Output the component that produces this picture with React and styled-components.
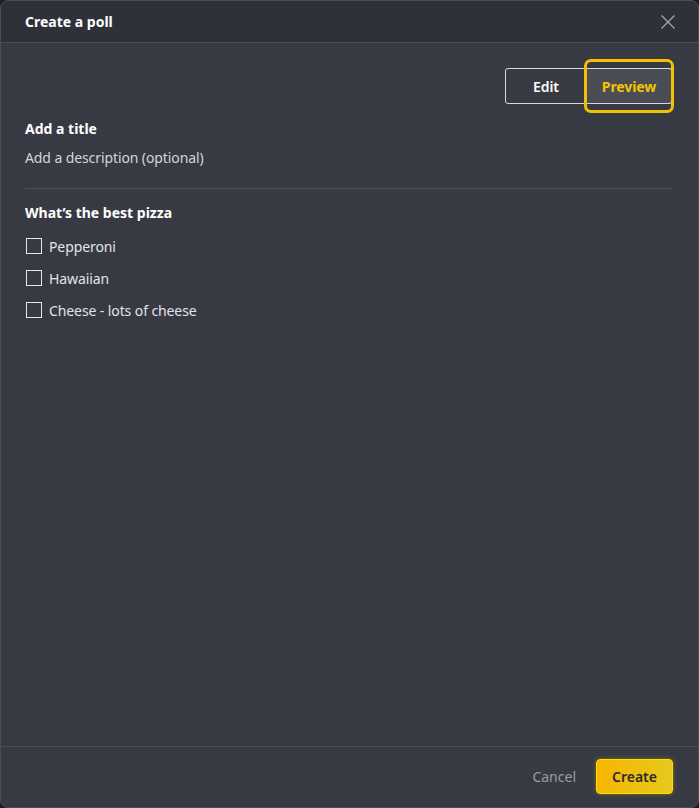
import React from 'react';
import styled, { createGlobalStyle, css } from 'styled-components';

const GlobalStyle = createGlobalStyle`
    html, body {
        margin: 0;
        padding: 0;
        background: #1c1d21;
    }
    body {
        font-family: 'Noto Sans', 'Open Sans', sans-serif;
    }
`;

const Dialog = styled.div`
    width: 699px;
    height: 808px;
    box-sizing: border-box;
    display: flex;
    flex-direction: column;
    background: #383a43;
    border: 1px solid #4b4e57;
    border-radius: 8px;
    overflow: hidden;
`;

const Header = styled.div`
    height: 41px;
    flex: none;
    display: flex;
    align-items: center;
    justify-content: space-between;
    padding: 0 24px;
    background: #2f3139;
    border-bottom: 1px solid #4b4e57;
`;

const Title = styled.h1`
    margin: 0;
    font-size: 14px;
    font-weight: 700;
    color: #ffffff;
`;

const CloseButton = styled.button`
    width: 20px;
    height: 20px;
    margin-right: -4px;
    padding: 0;
    border: none;
    background: none;
    display: flex;
    align-items: center;
    justify-content: center;
    cursor: pointer;
`;

const Body = styled.div`
    flex: 1;
    padding: 14px 25px 0 24px;
    display: flex;
    flex-direction: column;
`;

const Toolbar = styled.div`
    display: flex;
    justify-content: flex-end;
    padding-top: 11px;
    margin-right: 1px;
`;

const Toggle = styled.div`
    display: flex;
`;

const ToggleButton = styled.button`
    position: relative;
    height: 36px;
    box-sizing: border-box;
    padding: 0;
    font-family: inherit;
    font-size: 14px;
    font-weight: 600;
    letter-spacing: -0.1px;
    border: 1px solid #d8d9dc;
    cursor: pointer;
    ${props =>
        props.active
            ? css`
                  width: 85px;
                  color: #f5c400;
                  font-weight: 700;
                  background: #4b4d56;
                  border-left: none;
                  border-radius: 0 3px 3px 0;
              `
            : css`
                  width: 82px;
                  color: #ffffff;
                  background: transparent;
                  border-radius: 3px 0 0 3px;
              `}
`;

const FocusRing = styled.span`
    position: absolute;
    top: -10px;
    bottom: -10px;
    left: -3px;
    right: -3px;
    border: 3px solid #f2c200;
    border-radius: 7px;
    pointer-events: none;
`;

const PollTitle = styled.div`
    margin-top: 15px;
    font-size: 14px;
    font-weight: 700;
    color: #ffffff;
    line-height: 20px;
`;

const Description = styled.div`
    margin-top: 9px;
    font-size: 14px;
    color: #d4d5d8;
    line-height: 20px;
    letter-spacing: -0.1px;
`;

const Divider = styled.hr`
    margin: 20px 0 0;
    border: none;
    border-top: 1px solid #50535c;
`;

const Question = styled.div`
    margin-top: 14px;
    font-size: 14px;
    font-weight: 700;
    color: #ffffff;
    line-height: 20px;
`;

const Options = styled.ul`
    list-style: none;
    margin: 13px 0 0;
    padding: 0;
    display: flex;
    flex-direction: column;
    gap: 12px;
`;

const Option = styled.li`
    display: flex;
    align-items: center;
    gap: 7px;
    height: 20px;
    font-size: 14px;
    letter-spacing: -0.1px;
    color: #e2e3e5;
`;

const Box = styled.span`
    width: 16px;
    height: 16px;
    box-sizing: border-box;
    border: 1px solid #e6e7e9;
    margin-left: 1px;
`;

const Footer = styled.div`
    height: 59px;
    flex: none;
    display: flex;
    align-items: center;
    justify-content: flex-end;
    gap: 20px;
    padding: 0 25px 1px 24px;
    border-top: 1px solid #4b4e57;
`;

const TextButton = styled.button`
    border: none;
    background: none;
    padding: 0;
    font-family: inherit;
    font-size: 14px;
    color: #9a9ca3;
    cursor: pointer;
`;

const PrimaryButton = styled.button`
    width: 77px;
    height: 35px;
    box-sizing: border-box;
    font-family: inherit;
    font-size: 14px;
    font-weight: 600;
    color: #2a2b30;
    background: linear-gradient(90deg, #f7b500, #e6c91c);
    border: 1px solid #ffe100;
    border-radius: 4px;
    box-shadow: 0 0 4px rgba(255, 220, 0, 0.35);
    cursor: pointer;
`;

const options = ['Pepperoni', 'Hawaiian', 'Cheese - lots of cheese'];

export default function App() {
    return (
        <>
            <GlobalStyle />
            <Dialog>
                <Header>
                    <Title>Create a poll</Title>
                    <CloseButton aria-label="Close">
                        <svg width="16" height="16" viewBox="0 0 16 16">
                            <path d="M1.5 1.5l13 13M14.5 1.5l-13 13" stroke="#a3a5ab" strokeWidth="1.4" />
                        </svg>
                    </CloseButton>
                </Header>
                <Body>
                    <Toolbar>
                        <Toggle>
                            <ToggleButton>Edit</ToggleButton>
                            <ToggleButton active>
                                Preview
                                <FocusRing />
                            </ToggleButton>
                        </Toggle>
                    </Toolbar>
                    <PollTitle>Add a title</PollTitle>
                    <Description>Add a description (optional)</Description>
                    <Divider />
                    <Question>What’s the best pizza</Question>
                    <Options>
                        {options.map(opt => (
                            <Option key={opt}>
                                <Box />
                                {opt}
                            </Option>
                        ))}
                    </Options>
                </Body>
                <Footer>
                    <TextButton>Cancel</TextButton>
                    <PrimaryButton>Create</PrimaryButton>
                </Footer>
            </Dialog>
        </>
    );
}
